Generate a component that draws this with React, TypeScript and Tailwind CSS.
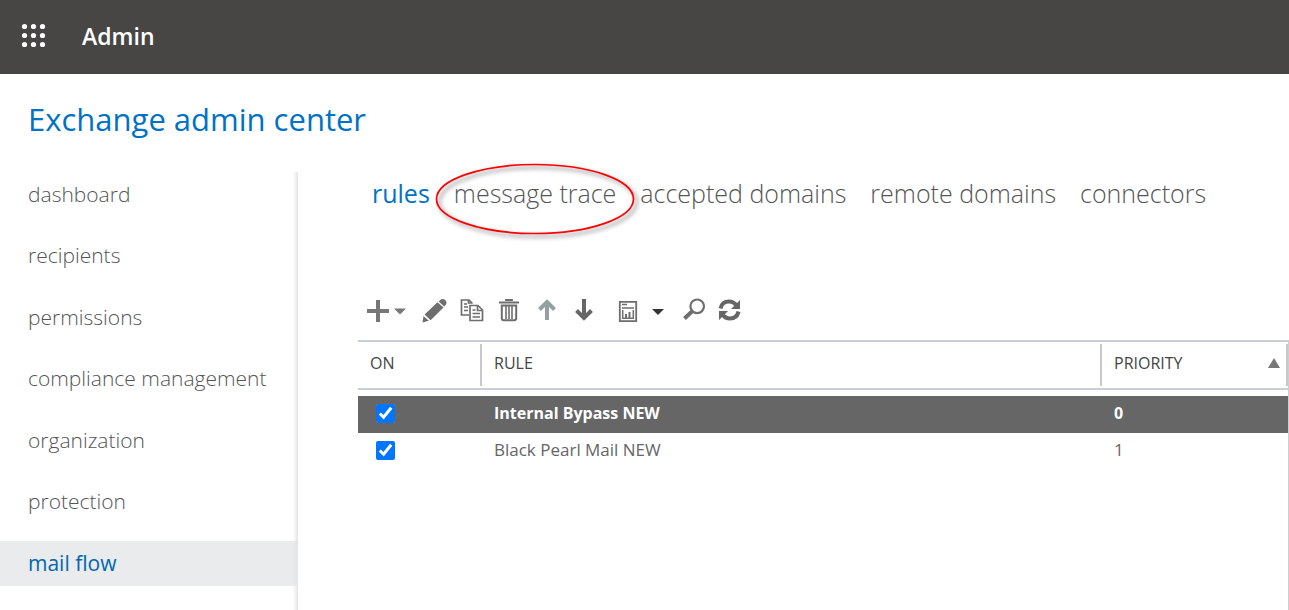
import type { ReactNode } from 'react';

const NAV = [
  'dashboard',
  'recipients',
  'permissions',
  'compliance management',
  'organization',
  'protection',
  'mail flow',
];

const RULES = [
  { name: 'Internal Bypass NEW', priority: 0, selected: true },
  { name: 'Black Pearl Mail NEW', priority: 1, selected: false },
];

const HEAD_CELL = 'pb-1 text-left font-normal';
const CELL = 'pb-1 text-left';

function Header() {
  return (
    <header className="flex h-[74px] items-center bg-[#484644] pb-1 pl-[21px] text-white">
      <button type="button" aria-label="App launcher">
        <svg width="25" height="25" viewBox="0 0 25 25" fill="currentColor">
          {[3, 12, 21].map((y) =>
            [3, 12, 21].map((x) => <circle key={`${x}-${y}`} cx={x + 0.5} cy={y + 0.5} r="2.6" />),
          )}
        </svg>
      </button>
      <span className="ml-9 pt-[2px] text-[23px] font-semibold">Admin</span>
    </header>
  );
}

function Sidebar() {
  return (
    <aside className="flex w-[298px] shrink-0">
      <nav className="flex min-h-[414px] flex-1 flex-col justify-between self-start">
        {NAV.map((item) => {
          const active = item === 'mail flow';
          return (
            <a
              key={item}
              href="#"
              className={`flex h-[45px] items-center pl-7 text-[21px] ${active ? 'bg-[#eaebec] text-[#0067b0]' : 'font-light text-[#555]'}`}
            >
              {item}
            </a>
          );
        })}
      </nav>
      <div className="-ml-1 w-[5px] bg-linear-to-r from-transparent to-[#e4e4e4]" />
    </aside>
  );
}

function Tabs() {
  return (
    <nav className="flex h-[46px] items-center gap-6 whitespace-nowrap pb-[2px] pl-[14px] text-[25px] font-light text-[#555]">
      <a href="#" className="font-normal text-[#0072c6]">
        rules
      </a>
      <a href="#" className="relative">
        message trace
        {/* hand-drawn callout ring */}
        <svg
          className="pointer-events-none absolute left-1/2 top-1/2 -translate-x-1/2 -translate-y-1/2 overflow-visible"
          width="200"
          height="72"
          viewBox="0 -5 200 72"
          fill="none"
        >
          <ellipse cx="103" cy="39" rx="98.5" ry="34.5" stroke="#000" strokeOpacity="0.3" strokeWidth="3" className="blur-[2px]" />
          <ellipse cx="100" cy="36" rx="98.5" ry="34.5" stroke="#f00" strokeWidth="1.7" />
        </svg>
      </a>
      <a href="#">accepted domains</a>
      <a href="#">remote domains</a>
      <a href="#">connectors</a>
    </nav>
  );
}

function ToolButton({ label, className, children }: { label: string; className: string; children: ReactNode }) {
  return (
    <button type="button" aria-label={label} className={className}>
      {children}
    </button>
  );
}

function Toolbar() {
  return (
    <div className="flex h-7 items-center pl-2">
      <ToolButton label="New" className="flex items-center gap-1 pt-[2px]">
        <svg width="24" height="24" viewBox="0 0 24 24" fill="#777">
          <path d="M10 1h4v9h9v4h-9v9h-4v-9H1v-4h9z" />
        </svg>
        <svg width="12" height="8" viewBox="0 0 12 8" fill="#777">
          <path d="M0 1.500h12L6 7.500z" />
        </svg>
      </ToolButton>
      <ToolButton label="Edit" className="ml-4">
        <svg width="25" height="25" viewBox="0 0 25 25" fill="#6e6e6e">
          <path d="M18 2.200c1.500-1.700 3.500-1.700 5.200-.2s1.700 3.500.4 5L22.200 8.400 16.600 3.500zM15.500 4.200l6 5.400L8.600 22.300l-6-5.700zM1.500 18l5.300 4.800L.5 24.500z" />
        </svg>
      </ToolButton>
      <ToolButton label="Copy" className="ml-[13px]">
        <svg width="24" height="24" viewBox="0 0 24 24" fill="none" stroke="#6e6e6e" strokeWidth="1.700">
          <path d="M9 17H1.500V2H9l3.500 3.500" />
          <path d="M8.500 2v3h3M4 6h3M4 9h4M4 12.500h4" />
          <path d="M10 7.500h8l4.500 4.500v10.500H10z" fill="#fff" />
          <path d="M17.500 7.500v5h5M12.500 12h3M12.500 15.500h7.500M12.500 19h7.500" />
        </svg>
      </ToolButton>
      <ToolButton label="Delete" className="ml-[15px]">
        <svg width="20" height="24" viewBox="0 0 20 24" fill="none" stroke="#6e6e6e">
          <path d="M0 4.500h20M7 3V2h6v1" strokeWidth="1.800" />
          <path d="M2.800 7.500h14.400v12.700q0 2-2 2H4.800q-2 0-2-2z" strokeWidth="2" />
          <path d="M7 8v13M10 8v13M13 8v13" strokeWidth="1.600" />
        </svg>
      </ToolButton>
      <ToolButton label="Move up" className="ml-[18px]">
        <svg width="20" height="24" viewBox="0 0 20 24" fill="none" stroke="#94a0a3" strokeWidth="4">
          <path d="M10 22V4M2.500 11.500 10 4l7.500 7.500" />
        </svg>
      </ToolButton>
      <ToolButton label="Move down" className="ml-[17px]">
        <svg width="20" height="24" viewBox="0 0 20 24" fill="none" stroke="#666" strokeWidth="4">
          <path d="M10 1v19M2.500 12.500 10 20l7.500-7.500" />
        </svg>
      </ToolButton>
      <ToolButton label="Reports" className="ml-6 flex items-center gap-[14px] pt-1">
        <svg width="20" height="24" viewBox="0 0 20 24" fill="none" stroke="#6e6e6e">
          <path d="M1.800 1.800h16.400v19.400H1.800z" strokeWidth="1.800" />
          <path d="M4 4.500h5M4 8h12" strokeWidth="1.500" />
          <path d="M4.700 10v8.300H16M15.300 10v8" strokeWidth="1.500" />
          <path d="M8 14v4M11.500 12v6" strokeWidth="2" />
        </svg>
        <svg width="12" height="8" viewBox="0 0 12 8" fill="#333">
          <path d="M0 1h12L6 7z" />
        </svg>
      </ToolButton>
      <ToolButton label="Search" className="ml-[19px]">
        <svg width="23" height="24" viewBox="0 0 23 24" fill="none" stroke="#6e6e6e">
          <circle cx="14.200" cy="8.300" r="6.800" strokeWidth="2.200" />
          <path d="M9.500 13 1.500 20.500" strokeWidth="4" />
        </svg>
      </ToolButton>
      <ToolButton label="Refresh" className="ml-3">
        <svg width="23" height="24" viewBox="0 0 23 24" fill="none" stroke="#666" strokeWidth="4">
          <path d="M2.500 10.500C3.500 5.500 7 3.500 11 3.500c3 0 5.500 1.200 7.500 4" />
          <path d="M20.500 13.500c-1 5-4.500 7-8.500 7-3 0-5.500-1.200-7.500-4" />
          <path d="M22 2v9h-9zM1 22v-9h9z" fill="#666" stroke="none" />
        </svg>
      </ToolButton>
    </div>
  );
}

function Divider({ side }: { side: string }) {
  return <span className={`absolute bottom-[2px] top-[2px] w-[2px] bg-[#c8c8c8] ${side}`} />;
}

function RulesTable() {
  return (
    <table className="w-full table-fixed border-collapse text-[17px]">
      <colgroup>
        <col className="w-[122px]" />
        <col />
        <col className="w-[188px]" />
      </colgroup>
      <thead>
        <tr className="h-12 border-y-2 border-[#c8d0d4] text-[16px] text-[#444]">
          <th className={`${HEAD_CELL} pl-3`}>ON</th>
          <th className={`${HEAD_CELL} relative pl-[14px]`}>
            <Divider side="left-0" />
            RULE
          </th>
          <th className={`${HEAD_CELL} relative pl-[14px] pr-2`}>
            <Divider side="left-0" />
            <Divider side="right-0" />
            <span className="flex items-center justify-between">
              PRIORITY
              <svg width="12" height="10" viewBox="0 0 12 10" fill="#777">
                <path d="M6 0l6 10H0z" />
              </svg>
            </span>
          </th>
        </tr>
      </thead>
      <tbody>
        <tr className="h-[7px]" aria-hidden="true">
          <td colSpan={3} />
        </tr>
        {RULES.map((rule) => (
          <tr
            key={rule.name}
            className={`h-[37px] ${rule.selected ? 'bg-[#666] text-[16px] font-bold text-white' : 'text-[#666]'}`}
          >
            <td className="pb-[2px] pl-[18px]">
              <input
                type="checkbox"
                defaultChecked
                aria-label={`${rule.name} on`}
                className="block size-[19px] accent-[#0075ff]"
              />
            </td>
            <td className={`${CELL} pl-[14px]`}>{rule.name}</td>
            <td className={`${CELL} pl-[14px]`}>{rule.priority}</td>
          </tr>
        ))}
      </tbody>
    </table>
  );
}

export default function App() {
  return (
    <div className="flex min-h-screen flex-col bg-white font-['Open_Sans','Noto_Sans',sans-serif]">
      <Header />
      <h1 className="flex h-[98px] items-center pb-2 pl-7 text-[31px] text-[#0072c6]">
        Exchange admin center
      </h1>
      <div className="flex flex-1">
        <Sidebar />
        <main className="flex min-w-0 flex-1 flex-col pl-[60px]">
          <Tabs />
          <div className="mt-[78px]">
            <Toolbar />
          </div>
          <div className="mt-4 flex-1 border-r border-[#c8d0d4]">
            <RulesTable />
          </div>
        </main>
      </div>
    </div>
  );
}
